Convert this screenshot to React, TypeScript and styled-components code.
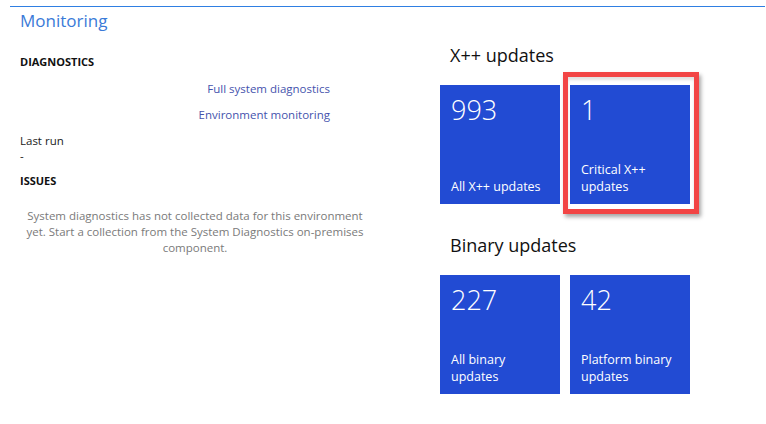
import React from "react";
import styled, { createGlobalStyle } from "styled-components";

const Global = createGlobalStyle`
  html, body { margin: 0; padding: 0; background: #fff; }
  body { font-family: "Open Sans", "Noto Sans", sans-serif; color: #1a1a1a; }
`;

const Page = styled.div`
  width: 766px;
  height: 424px;
  padding: 6px 1px 0 10px;
  box-sizing: border-box;
  overflow: hidden;
`;

const TopRule = styled.div`
  border-top: 1px solid #2f7fe2;
`;

const Title = styled.h1`
  margin: 0 0 0 10px;
  font-size: 17px;
  font-weight: 400;
  line-height: 28px;
  color: #3a7ad8;
`;

const Columns = styled.div`
  display: flex;
  padding-left: 10px;
`;

const Left = styled.div`
  width: 350px;
  display: flex;
  flex-direction: column;
`;

const Right = styled.div`
  margin-left: 70px;
  width: 270px;
  display: flex;
  flex-direction: column;
`;

const SectionHead = styled.div<{ $top: number }>`
  margin-top: ${(p) => p.$top}px;
  font-size: 11px;
  font-weight: 700;
  line-height: 14px;
  color: #111;
`;

const Links = styled.div`
  width: 310px;
  margin-top: 12px;
  display: flex;
  flex-direction: column;
  align-items: flex-end;
  gap: 10px;
`;

const Link = styled.a`
  font-size: 11.5px;
  line-height: 16px;
  color: #4553ad;
  text-decoration: none;
  cursor: pointer;
`;

const Field = styled.div<{ $top: number }>`
  margin-top: ${(p) => p.$top}px;
  font-size: 11.5px;
  line-height: 15px;
  color: #1a1a1a;
`;

const Note = styled.p`
  margin: 20px 0 0;
  width: 350px;
  text-align: center;
  font-size: 11.5px;
  line-height: 16px;
  color: #7a7a7a;
`;

const GroupHead = styled.h2<{ $top: number }>`
  margin: ${(p) => p.$top}px 0 0 10px;
  font-size: 18px;
  font-weight: 400;
  line-height: 26px;
  color: #111;
`;

const TileRow = styled.div`
  margin-top: 17px;
  display: flex;
  gap: 10px;
`;

const Tile = styled.div`
  position: relative;
  width: 120px;
  height: 119px;
  box-sizing: border-box;
  padding: 8px 8px 9px 11px;
  background: #224bd3;
  color: #fff;
  display: flex;
  flex-direction: column;
  justify-content: space-between;
`;

const Count = styled.div`
  font-size: 27px;
  font-weight: 300;
  line-height: 34px;
`;

const Label = styled.div`
  font-size: 12.5px;
  line-height: 17px;
`;

const Highlight = styled.div`
  position: absolute;
  left: -7px;
  top: -13px;
  right: -9px;
  bottom: -10px;
  border: 5px solid #f24545;
  box-shadow: 2px 3px 4px rgba(0, 0, 0, 0.35), inset 0 3px 3px rgba(0, 0, 0, 0.12);
  pointer-events: none;
`;

type TileData = { count: string; label: string; highlight?: boolean };

const xpp: TileData[] = [
  { count: "993", label: "All X++ updates" },
  { count: "1", label: "Critical X++ updates", highlight: true },
];

const binary: TileData[] = [
  { count: "227", label: "All binary updates" },
  { count: "42", label: "Platform binary updates" },
];

const TileView = ({ t }: { t: TileData }) => (
  <Tile>
    {t.highlight && <Highlight />}
    <Count>{t.count}</Count>
    <Label>{t.label}</Label>
  </Tile>
);

export default function App() {
  return (
    <>
      <Global />
      <Page>
        <TopRule />
        <Title>Monitoring</Title>
        <Columns>
          <Left>
            <SectionHead $top={20}>DIAGNOSTICS</SectionHead>
            <Links>
              <Link>Full system diagnostics</Link>
              <Link>Environment monitoring</Link>
            </Links>
            <Field $top={10}>Last run</Field>
            <Field $top={0}>-</Field>
            <SectionHead $top={11}>ISSUES</SectionHead>
            <Note>
              System diagnostics has not collected data for this environment
              yet. Start a collection from the System Diagnostics on-premises
              component.
            </Note>
          </Left>
          <Right>
            <GroupHead $top={7}>X++ updates</GroupHead>
            <TileRow>
              {xpp.map((t) => (
                <TileView key={t.label} t={t} />
              ))}
            </TileRow>
            <GroupHead $top={28}>Binary updates</GroupHead>
            <TileRow>
              {binary.map((t) => (
                <TileView key={t.label} t={t} />
              ))}
            </TileRow>
          </Right>
        </Columns>
      </Page>
    </>
  );
}
